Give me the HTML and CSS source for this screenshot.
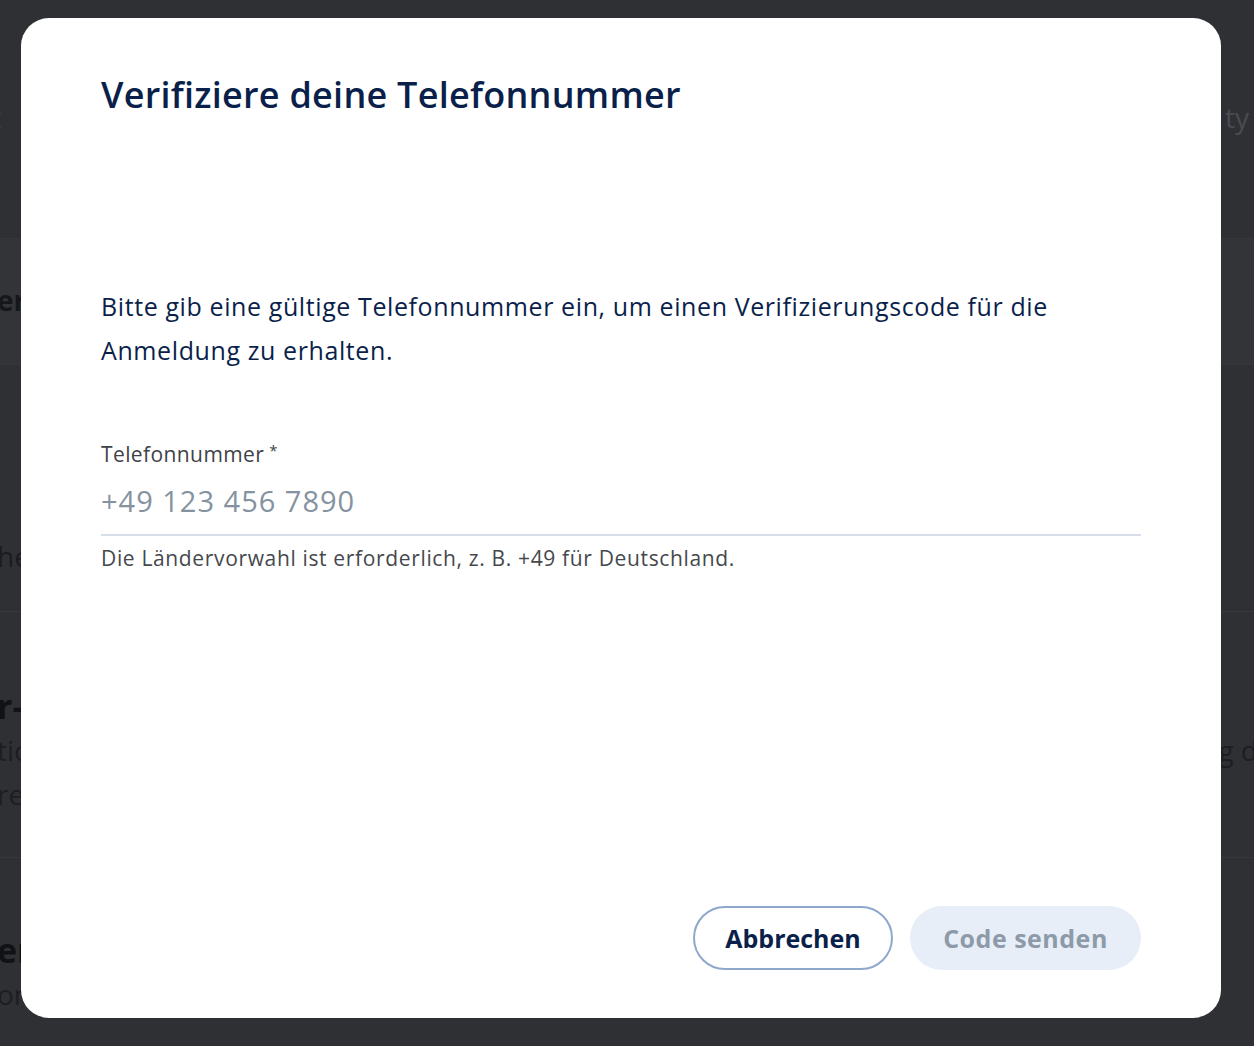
FILE: index.html
```html
<!DOCTYPE html>
<html lang="de">
<head>
<meta charset="utf-8">
<title>Verifiziere deine Telefonnummer</title>
<link rel="stylesheet" href="styles.css">
</head>
<body>
<div class="page">
  <div class="page-head">
    <span class="bg-text head-left">t</span>
    <span class="bg-text right-end">ty</span>
  </div>
  <div class="page-band">
    <span class="bg-text strong">er Telefonnummer hinzufügen</span>
  </div>
  <div class="page-sec sec-a">
    <span class="bg-text">he Sicherheit für dein Konto</span>
  </div>
  <div class="page-sec sec-b">
    <div class="bg-title">r-Faktor-Authentifizierung</div>
    <div class="bg-row">
      <span class="bg-text">tion für die zusätzliche Absicherung</span>
      <span class="bg-text right-over">bei der Anmeldung d</span>
    </div>
    <div class="bg-row">
      <span class="bg-text">re Daten</span>
    </div>
  </div>
  <div class="page-sec sec-c">
    <div class="bg-title">er Geräte</div>
    <div class="bg-row"><span class="bg-text">onl angemeldete Geräte</span></div>
  </div>
</div>

<div class="overlay">
  <div class="modal" role="dialog" aria-labelledby="dlg-title">
    <h1 class="modal-title" id="dlg-title">Verifiziere deine Telefonnummer</h1>
    <p class="modal-text">Bitte gib eine gültige Telefonnummer ein, um einen Verifizierungscode für die Anmeldung zu erhalten.</p>
    <div class="field">
      <label class="field-label" for="phone">Telefonnummer<span class="req">*</span></label>
      <input class="field-input" id="phone" type="tel" placeholder="+49 123 456 7890">
      <div class="field-help">Die Ländervorwahl ist erforderlich, z. B. +49 für Deutschland.</div>
    </div>
    <div class="actions">
      <button class="btn btn-outline" type="button">Abbrechen</button>
      <button class="btn btn-disabled" type="button" disabled>Code senden</button>
    </div>
  </div>
</div>
</body>
</html>
```

FILE: styles.css
```css
html, body {
  margin: 0;
  padding: 0;
}
body {
  background: #2f3033;
  font-family: "Open Sans", "Noto Sans", sans-serif;
  font-variant-ligatures: none;
  overflow: hidden;
  height: 1046px;
}

/* faded page behind the dialog */
.page {
  margin-left: -3px;
  color: #1b1c20;
}
.bg-text {
  font-size: 28px;
  white-space: nowrap;
}
.bg-text.strong { font-weight: 700; color: #16171b; }
.page-head {
  height: 238px;
  display: flex;
  justify-content: space-between;
  align-items: flex-start;
  padding-top: 98px;
  box-sizing: border-box;
}
.page-head .head-left { color: #3a3b40; margin-left: -5px; }
.page-head .right-end { color: #4a4b50; margin-right: 5px; }
.page-band {
  height: 127px;
  background: #333438;
  border-top: 1px solid #36373b;
  border-bottom: 1px solid #36373b;
  box-sizing: border-box;
  padding-top: 42px;
}
.page-sec { box-sizing: border-box; }
.sec-a {
  height: 247px;
  padding-top: 172px;
  border-bottom: 1px solid #37383c;
}
.sec-b {
  height: 246px;
  padding-top: 72px;
  border-bottom: 1px solid #37383c;
}
.sec-c {
  padding-top: 70px;
}
.bg-title {
  font-size: 34px;
  font-weight: 700;
  color: #111216;
  line-height: 44px;
  white-space: nowrap;
}
.bg-row {
  display: flex;
  justify-content: space-between;
  line-height: 44px;
  color: #1d1e22;
}
.right-over { margin-right: -4px; color: #1d1e22; }

/* dialog */
.overlay {
  position: fixed;
  inset: 0;
}
.modal {
  position: absolute;
  left: 21px;
  top: 18px;
  width: 1200px;
  height: 1000px;
  box-sizing: border-box;
  background: #ffffff;
  border-radius: 28px;
  padding: 55px 80px 48px;
  display: flex;
  flex-direction: column;
  color: #0b1f4b;
}
.modal-title {
  margin: 0;
  font-size: 36px;
  line-height: 44px;
  letter-spacing: 0.25px;
  font-weight: 600;
  color: #0b1f4b;
}
.modal-text {
  margin: 167px 0 0;
  font-size: 25px;
  line-height: 44px;
  letter-spacing: 0.6px;
  color: #0b1f4b;
}
.field {
  margin-top: 68px;
  display: flex;
  flex-direction: column;
}
.field-label {
  font-size: 21px;
  line-height: 28px;
  letter-spacing: 0.4px;
  color: #3f4247;
}
.req {
  font-size: 15px;
  vertical-align: top;
  margin-left: 5px;
  line-height: 20px;
}
.field-input {
  margin-top: 4px;
  box-sizing: border-box;
  height: 64px;
  border: none;
  border-bottom: 2px solid #d6dfe8;
  padding: 0 0 6px;
  font-family: inherit;
  font-size: 29px;
  letter-spacing: 1px;
  color: #0b1f4b;
  outline: none;
  background: transparent;
}
.field-input::placeholder { color: #8592a0; }
.field-help {
  margin-top: 8px;
  font-size: 21px;
  line-height: 28px;
  letter-spacing: 0.65px;
  color: #45484d;
}
.actions {
  margin-top: auto;
  display: flex;
  justify-content: flex-end;
  gap: 17px;
}
.btn {
  height: 64px;
  border-radius: 32px;
  font-family: inherit;
  font-size: 25px;
  font-weight: 700;
  box-sizing: border-box;
}
.btn-outline {
  width: 200px;
  background: #fff;
  border: 2px solid #8ea8cc;
  color: #0b1f4b;
}
.btn-disabled {
  width: 231px;
  background: #e8eef7;
  border: none;
  letter-spacing: 0.5px;
  color: #8d9aa9;
}
```
